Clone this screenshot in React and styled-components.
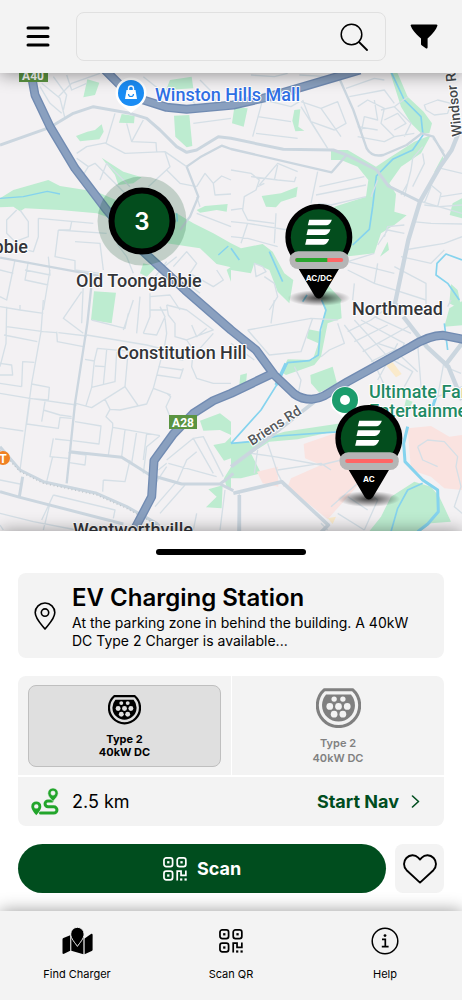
import React, { useState } from 'react'
import styled, { createGlobalStyle } from 'styled-components'

const GlobalStyle = createGlobalStyle`
  * {
    box-sizing: border-box;
  }

  body {
    margin: 0;
    background-color: #fff;
    color: #000;
    font-family: Inter, 'Liberation Sans', sans-serif;
  }

  button, input {
    font-family: inherit;
    color: inherit;
  }
`

/* ---------- icons ---------- */

const MenuIcon = () => (
  <svg width="24" height="21" viewBox="0 0 24 21" stroke="#000" strokeWidth="3" strokeLinecap="round" aria-hidden="true">
    <path d="M2 2H22M2 10.5H22M2 19H22" />
  </svg>
)

const SearchIcon = () => (
  <svg width="28" height="28" viewBox="0 0 28 28" fill="none" stroke="#000" strokeWidth="1.5" strokeLinecap="round" aria-hidden="true">
    <circle cx="11.5" cy="11.5" r="10.3" />
    <path d="M19 19L27 27" strokeWidth="1.8" />
  </svg>
)

const FilterIcon = () => (
  <svg width="28" height="25" viewBox="0 0 28 25" aria-hidden="true">
    <path d="M1.6 .5H26.4C27.3 .5 27.7 1.3 27.3 2.1C26 5.6 23.6 9 17.6 14.6V23.2C17.6 24.3 16.7 24.8 15.8 24.2L11.6 21.2C11.1 20.9 11 20.6 11 20.1V14.6C4.8 9 2.2 5.6 .8 2.1C.4 1.3 .7 .5 1.6 .5Z" />
  </svg>
)

const LocationIcon = () => (
  <svg width="22" height="28" viewBox="0 0 22 28" fill="none" stroke="#000" strokeWidth="1.6" strokeLinejoin="round" aria-hidden="true">
    <path d="M11 27C9 24 1.2 17.4 1.2 10.6A9.8 9.6 0 0 1 20.8 10.6C20.8 17.4 13 24 11 27Z" />
    <circle cx="11" cy="10.6" r="3.7" />
  </svg>
)

const PlugIcon = ({ width, color, hole }) => (
  <svg width={width} viewBox="0 0 134 118" aria-hidden="true">
    <path d="M25 5H109A63 63 0 1 1 25 5Z" fill="none" stroke={color} strokeWidth="9" strokeLinejoin="round" />
    <path d="M30 19H104A49 49 0 1 1 30 19Z" fill={color} />
    <g fill={hole}>
      <circle cx="54" cy="33" r="8" />
      <circle cx="80" cy="33" r="8" />
      <circle cx="41" cy="55" r="10" />
      <circle cx="67" cy="55" r="10" />
      <circle cx="93" cy="55" r="10" />
      <circle cx="54" cy="78" r="10" />
      <circle cx="80" cy="78" r="10" />
    </g>
  </svg>
)

const RouteIcon = () => (
  <svg width="28" height="28" viewBox="0 0 28 28" aria-hidden="true">
    <path d="M21 12.9H17A2.9 2.9 0 0 0 17 18.8H22.8A3.1 3.1 0 0 1 22.8 25.1H9.5" fill="none" stroke="#22a52b" strokeWidth="3" strokeLinecap="round" />
    <path fillRule="evenodd" fill="#22a52b" d="M5.3 27.2C4 25.6 .3 21.6 .3 18.4A5 5 0 0 1 10.3 18.4C10.3 21.6 6.6 25.6 5.3 27.2ZM5.3 16.2A2.2 2.2 0 1 0 5.3 20.6A2.2 2.2 0 1 0 5.3 16.2Z" />
    <path fillRule="evenodd" fill="#22a52b" stroke="#f3f3f3" strokeWidth=".6" d="M22 13.4C20.8 12 16.8 8.4 16.8 5.2A5.2 5.2 0 0 1 27.2 5.2C27.2 8.4 23.2 12 22 13.4ZM22 3A2.1 2.1 0 1 0 22 7.2A2.1 2.1 0 1 0 22 3Z" />
  </svg>
)

const ChevronIcon = () => (
  <svg width="9" height="13" viewBox="0 0 9 13" fill="none" stroke="#004d1e" strokeWidth="1.6" strokeLinecap="round" strokeLinejoin="round" aria-hidden="true">
    <path d="M1.5 1L7.5 6.5L1.5 12" />
  </svg>
)

const QrIcon = () => (
  <svg width="24" height="24" viewBox="0 0 25 25" fill="none" stroke="currentColor" strokeWidth="1.8" aria-hidden="true">
    <rect x="1" y="1" width="9" height="9" rx="2.4" />
    <rect x="14.8" y="1" width="9" height="9" rx="2.4" />
    <rect x="1" y="14.8" width="9" height="9" rx="2.4" />
    <path d="M14.8 24.6V14.8H18.8V19.2H23.8V14" />
    <g fill="currentColor" stroke="none">
      <rect x="4.3" y="4.3" width="2.4" height="2.4" />
      <rect x="18.1" y="4.3" width="2.4" height="2.4" />
      <rect x="4.3" y="18.1" width="2.4" height="2.4" />
      <rect x="17.8" y="22.3" width="2.3" height="2.3" />
      <rect x="22.4" y="22.3" width="2.3" height="2.3" />
    </g>
  </svg>
)

const HeartIcon = () => (
  <svg width="34" height="30" viewBox="0 0 34 30" fill="none" stroke="#000" strokeWidth="1.9" strokeLinejoin="round" aria-hidden="true">
    <path d="M17 28.6L3.6 16.2C.2 12.8 .2 7.4 3.4 4C6.8 .5 12 .4 15.2 3.6L17 5.6L18.8 3.6C22 .4 27.2 .5 30.6 4C33.8 7.4 33.8 12.8 30.4 16.2Z" />
  </svg>
)

const MapIcon = () => (
  <svg width="31" height="28" viewBox="0 0 31 28" aria-hidden="true">
    <path d="M.5 12.4C.5 11.6 .8 11.2 1.4 11L8.2 8.2V23.8L2 26.8C1.2 27.1 .5 26.8 .5 26Z" />
    <path d="M9.3 8.4L15.5 18.6L21.4 8.6V27.2L9.3 23.8Z" />
    <path d="M22.6 11.4L29 7C29.9 6.5 30.6 6.9 30.6 7.7V22.4C30.6 23.2 30.3 23.6 29.7 23.9L22.6 27.2Z" />
    <path d="M15.4 19.4C13.4 16.2 8.7 11.6 8.7 7A6.7 6.7 0 0 1 22.1 7C22.1 11.6 17.4 16.2 15.4 19.4Z" stroke="#f3f3f3" strokeWidth="1" />
  </svg>
)

const InfoIcon = () => (
  <svg width="28" height="28" viewBox="0 0 28 28" fill="none" stroke="#000" strokeWidth="1.5" aria-hidden="true">
    <circle cx="14" cy="14" r="12.8" />
    <path d="M11 12.4H14.3V19.6M10.8 19.6H17.6" strokeWidth="1.7" />
    <circle cx="14" cy="8.6" r="1.4" fill="#000" stroke="none" />
  </svg>
)

/* ---------- map ---------- */

const highways = [
  'M95 20L105 75L150 170L225 295L320 420L430 545L555 660L693 780L768 840L823 915L883 972Q905 988 935 988Q955 986 973 977L1043 935L1233 830Q1290 795 1330 796L1390 808',
  'M823 908L693 970L640 992L580 1030L520 1092L462 1172L455 1280L405 1375',
  'M315 0L360 45L430 90L500 112L560 118L700 105L800 82L893 55L1080 0',
]

const MapArt = () => (
  <MapSvg viewBox="0 0 462 458" preserveAspectRatio="xMidYMid slice" role="img" aria-label="Map of chargers around Old Toongabbie">
    <rect width="462" height="458" fill="#f3f1f3" />
    <g transform="scale(.33333) translate(0 -9)" fill="none" strokeLinejoin="round">
      {/* parks */}
      <g fill="#bdecd0">
        <path d="M262 28L298 38L285 75L250 82ZM510 30L575 20L580 55L498 60ZM365 132L404 138L402 160L357 158ZM522 137L568 135L577 228L560 232L526 200ZM228 198L262 185L285 180L305 163L311 185L298 208L240 214Z" />
        <path d="M0 385L40 360L145 330L180 348L290 365L360 395L425 420L530 430L580 460L640 490L693 520V592L650 582L600 535L555 528L500 520L430 480L290 430L180 420L75 415L60 424L40 410L0 412Z" />
        <path d="M305 263L370 305L425 322L400 340L355 345L345 315ZM590 420L615 408L683 402L680 425L650 420L600 428ZM430 580L470 590L440 620L420 610ZM282 664L348 668L335 760L273 750ZM680 600L693 590V635Z" />
        <g transform="translate(693 0)">
          <path d="M10 112L50 115L38 170L3 160ZM190 120L208 118L202 170L220 182L193 184L184 152ZM475 0L500 10L530 80L578 125L603 160L595 190L570 190L540 160L510 110ZM300 240L350 240L435 290L480 260L550 215L600 195L570 250L510 290L475 340L495 372L490 425L527 436L490 465L450 490L430 550L360 558L300 560L310 410L405 380L412 330L380 290L330 270L300 270ZM92 378L150 370L200 350L196 380L150 395L135 412L105 410ZM470 515L474 540L447 560ZM635 258L640 275L620 312L610 305ZM693 385L665 400L656 435L693 445Z" />
          <path d="M0 520L30 535L95 522L125 545L160 610L187 630L175 700L140 665L115 600L70 580L60 610L0 600ZM285 640L332 690L310 725L285 730L270 690ZM660 642L680 660L693 720L655 700Z" />
        </g>
        <g transform="translate(0 690)">
          <path d="M600 362L660 340L693 365V405L660 390L610 392ZM640 435L675 428L693 410V475L672 482ZM693 500L672 535L680 560L693 570ZM625 568L668 556L665 625L618 622L650 590Z" />
        </g>
        <g transform="translate(693 690)">
          <path d="M285 20L328 0L332 55L290 70L270 170L250 195L165 225L150 215L170 178L245 180L262 130L228 115L232 88L270 95ZM238 225L305 200L318 250L265 278L240 250ZM28 225L48 220L45 250L25 255ZM0 430L80 420L160 395L330 370L330 390L200 418L115 425L60 460L90 520L30 535L0 535ZM655 25L700 0V75L640 80ZM525 298L545 305L535 325L520 320Z" />
          <path d="M480 590L550 545L600 560L625 590L660 665L600 670L560 700H410L450 650Z" />
        </g>
      </g>

      {/* medical and shopping blocks */}
      <g transform="translate(693 690)">
        <path fill="#fae3e0" d="M218 432L340 390L430 500L290 658L170 560L180 535L270 495L222 475ZM78 515L140 500L142 560L95 550ZM530 385L600 378L655 410L693 405V570L640 565L600 530L540 510Z" />
        <path fill="#faeacb" d="M465 195L485 187L512 222L495 232ZM290 655L315 650L305 672Z" />
      </g>

      {/* creeks */}
      <g stroke="#85d3ee" strokeWidth="5">
        <path d="M0 385L70 380L142 364L180 372M530 430L532 455M655 555L685 528" strokeWidth="4" />
        <g transform="translate(693 0)">
          <path d="M480 5L520 90L570 140L576 195L545 240L485 268L436 318L425 410L415 478L365 525M0 535L25 570M115 545L155 635M228 675L215 695M693 570L645 552L618 580L615 615L650 640L685 690" />
        </g>
        <g transform="translate(693 690)">
          <path d="M272 0L285 30L268 90L262 165L235 182L170 188L140 250L90 330L0 430M0 430L60 425L140 408L330 395M640 70L650 150" />
          <path d="M530 380L518 430L522 485L575 540L620 570L622 635L590 672L560 695M615 290L605 320" strokeWidth="9" />
          <path d="M575 550L530 570L500 625L480 695" />
          <path d="M165 190L135 255" strokeWidth="10" />
        </g>
      </g>

      {/* side streets */}
      <g stroke="#d5dfe6" strokeWidth="4">
        <path d="M125 40L180 85L195 145M160 20L200 75L190 120M200 15L215 60L260 40M175 80L215 40L300 10M120 50L150 100L185 130M345 130L318 220L375 250L495 245L560 290M230 250L260 230L320 218M380 160L395 215L468 218L470 245M395 215L430 150M580 160L693 145M575 90L600 120L693 115M600 30L650 80L640 110M430 20L480 60M230 265L265 290L285 280L375 370M265 290L240 330M300 330L320 280L390 350M495 245L510 290L445 350M500 300L540 340L590 350M590 350L615 310L640 340L665 318L693 330M640 340L645 375L693 372M590 380L600 410M590 430L693 470" />
        <path d="M50 420L20 450V490L45 515L85 500V455L60 420M115 445V500L100 545L0 520M115 445L280 460M175 480L165 560L225 572V600L300 610M215 455L210 480L175 480M175 480L320 490M225 515L300 520L310 600M85 575L75 630L145 645M75 600L150 615L145 560M45 570L20 690L0 680M150 600L130 720M0 600L40 610M245 665L190 745L250 790M250 640L245 760M400 610L380 560L350 520M500 575L450 640M520 590L560 545L590 580L570 610L640 650L670 630L650 600M490 620L530 650M450 680L510 675L540 720M480 600L530 560M560 640L600 670M420 680L410 790M450 670V740L430 790" />
        <g transform="translate(693 0)">
          <path d="M60 15L130 20L170 10M205 15L290 20M180 95L100 70L65 200M100 90L180 110L205 95M80 140L180 155M75 190L200 205M210 95L270 115L320 95L345 160L310 180L240 155L290 235M240 155L215 90M210 110L290 235M270 115L330 200M345 55L430 25L460 30M355 80L460 60L490 100M380 110L410 90L460 115L450 160L490 200L550 190M430 90L440 150L400 140L390 190M450 120L490 110L540 160L520 200M490 110L530 80M460 150L500 130L525 160L490 180M380 170L440 180M380 200L460 215L490 200" />
          <path d="M580 105L620 90L660 100L650 130L610 135L585 120ZM0 300L60 310L85 330L75 360L40 380L35 420L50 450L130 460M85 345L140 280L200 305M60 320L140 330L190 335L195 320M100 340L80 350M140 285L130 330M0 420L35 415M0 455L50 460L170 480M0 500L50 505L140 530M135 430L130 520M50 460L30 520M260 305L240 400M265 350L400 320M255 375L405 345M262 400L300 405L405 380M440 330L420 380M520 380L540 300L545 265L575 230M545 350L580 280L575 250M510 375L530 340M605 205L640 245M555 390L693 430M600 350L580 400M600 345L630 370L620 410L580 405M625 410L693 405M630 295L693 310M630 380L693 370M545 455L600 460L693 462M460 500L470 470L520 465M440 525L470 480L520 490M520 540L640 520L693 500M510 560L600 580L640 540M430 550L350 575L490 610M350 600L430 640L585 690M440 580L430 640M490 590L585 640V720M370 640L365 690M70 580L95 590L105 605L75 620ZM100 620L130 640L140 680L115 720" />
        </g>
        <g transform="translate(0 690)">
          <path d="M20 80L130 95L170 98M12 105L112 125M0 20L60 30V15M60 30L130 40M130 0L123 95L95 250L60 510M20 20L18 130L0 200M170 95L172 125L250 140M175 98L260 108M65 260L68 185L103 187M65 260L0 250M0 190L35 195L38 225L0 225M95 252L148 262L145 300L85 295M0 280L90 295L230 315M90 295L80 372L175 385L180 352L215 355M135 305L125 365M130 330L180 345L215 350M0 383L70 393M160 415L150 470L205 475M165 417L210 422M158 470L140 545M205 458L258 465L255 495L208 488M225 365L303 378L297 432L218 422M0 540L60 552M0 675L10 690" />
          <path d="M275 60L375 85L385 40M260 105L440 135L500 150M255 178L283 183L292 145L400 155M283 183L275 262L345 245L350 155M285 198L315 200M320 150L310 255M275 262L257 320M228 310L275 323L375 260L385 150M375 260L415 318M315 298L330 328L360 330L440 312L460 265L512 285M330 328L318 350L338 370V382L480 407M338 382L325 465M375 390L365 470M410 395L395 490M440 400L430 480M480 407L440 440L430 520M500 280L512 290L498 320L510 350M460 265L485 170L550 180M475 200L547 210M470 225L540 235L550 205M430 100L470 105L495 50L480 20M400 0L370 90M450 30L500 30M500 15L505 45L525 70V110L560 120L640 90L600 60L560 30L500 15M560 120L580 150M575 75L590 110L620 85M495 55L500 100L490 160M580 150L575 200L590 235L640 250L693 250M600 145L640 100M500 480L580 415L640 520M505 490L650 530M475 510L500 490M530 550L560 480L590 455M580 415L610 410L670 530M465 620L530 545M480 640L555 555M310 540L375 545L390 480M310 540L308 575M160 585L345 630L340 655M160 585L125 660M150 610L130 690M0 640L100 665L230 690M460 560L500 500M580 690L590 640M675 570L660 690" />
        </g>
        <g transform="translate(693 690)">
          <path d="M50 90L240 55L320 60M50 90L115 165L210 155L245 55M130 0L120 70M270 170L295 150L340 130L320 70M340 75L430 190L480 300M370 60L470 170L545 215L520 260M350 95L420 60L460 30M370 125L470 75M395 155L540 75M420 185L490 150L560 215M440 130L500 150M390 60L520 130L500 180M430 50L540 100M660 0L650 20M640 180L620 290L693 260M640 200L690 220M500 130L440 240M560 130L570 260L545 290M0 130L70 180M190 200L210 240L200 290M110 430L140 520L160 560M140 510L270 490L300 510M80 450L70 520M60 460L130 470L270 495L330 480M25 580L20 700M300 620L380 550L440 600L400 690M320 640L400 690M350 590L410 630M560 440L590 420L640 425L680 470L675 500L690 560L670 620L693 640M560 440L575 480L620 500M270 670L290 690" />
        </g>
      </g>

      {/* collector roads */}
      <g stroke="#cbd6df" strokeWidth="9">
        <path d="M0 225L150 172L220 130L280 110L390 130L440 145L480 180L530 230L560 247L590 240L655 200L693 205L850 238L1000 240L1040 255L1130 300L1165 348L1260 395" />
        <path d="M560 290L600 262L665 227L693 237L995 307L1040 255M560 290L595 380L570 440L540 480M0 563L310 620M275 640L262 760L225 1000L200 1240" strokeWidth="7" />
        <path d="M1020 30L1060 120L1100 235Q1115 262 1150 255L1220 225L1265 190L1300 200L1335 260" strokeWidth="7" />
        <path d="M1375 190L1355 240L1320 290L1260 395L1225 510L1185 700L1210 730M1210 740L1280 830L1345 890L1386 990M1340 880L1386 820" strokeWidth="13" />
        <path d="M210 1145L365 1162L450 1215L545 1242L660 1242Q685 1225 700 1210M660 1242L700 1262" />
        <path d="M0 1265L60 1282L370 1362M68 1220L58 1280M0 1130L60 1200L130 1235L290 1270L380 1310L470 1360L500 1390" />
        <path d="M950 990L760 1140L693 1190M700 1270L845 1235L985 1365L960 1390M718 1275V1390" strokeWidth="11" />
      </g>
      <path d="M0 1140L60 1205L130 1240L290 1275L380 1315L480 1370" stroke="#bfc6cb" strokeWidth="4" strokeDasharray="3 8" />

      {/* motorways */}
      {highways.map((d) => <path key={d} d={d} stroke="#718bb2" strokeWidth="27" />)}
      {highways.map((d) => <path key={d} d={d} stroke="#8aa0bf" strokeWidth="19" />)}
    </g>

    {/* place badges */}
    <g>
      <path d="M131 40L120 31A15.500 15.500 0 1 1 142 31Z" fill="#fff" />
      <circle cx="131" cy="20" r="13" fill="#1a8cf4" />
      <path d="M126.500 17H135.500L137 26H125Z" fill="#fff" />
      <path d="M128.500 17V15.500A2.500 2.500 0 0 1 133.500 15.500V17" fill="none" stroke="#fff" strokeWidth="1.400" />
      <path d="M128.500 21A2.500 2.500 0 0 0 133.500 21" fill="none" stroke="#1a8cf4" strokeWidth="1.200" />
      <path d="M345 346L333 336A14.500 14.500 0 1 1 357 336Z" fill="#fff" />
      <circle cx="345" cy="327" r="13" fill="#1b9c6c" />
      <circle cx="345" cy="327" r="5" fill="#fff" />
      <circle cx="3" cy="385" r="7" fill="#f08122" />
      <rect x="19" y="-4" width="29" height="13" fill="#5b9441" />
      <rect x="169" y="342" width="28" height="14" fill="#5b9441" />
    </g>
    <BadgeLabel x="33" y="7">A40</BadgeLabel>
    <BadgeLabel x="183" y="354">A28</BadgeLabel>
    <BadgeLabel x="3" y="390">T</BadgeLabel>

    <PlaceLabel x="155" y="28" $color="#2f6fe4">Winston Hills Mall</PlaceLabel>
    <PlaceLabel x="76" y="214">Old Toongabbie</PlaceLabel>
    <PlaceLabel x="28" y="180" textAnchor="end">Toongabbie</PlaceLabel>
    <PlaceLabel x="117" y="286">Constitution Hill</PlaceLabel>
    <PlaceLabel x="352" y="242">Northmead</PlaceLabel>
    <PlaceLabel x="73" y="463">Wentworthville</PlaceLabel>
    <PlaceLabel x="369" y="325" $color="#1f8a64">Ultimate Fan</PlaceLabel>
    <PlaceLabel x="369" y="344" $color="#1f8a64">Entertainment</PlaceLabel>
    <PlaceLabel transform="translate(252 373) rotate(-33)" $size={14} $color="#55585c">Briens Rd</PlaceLabel>
    <PlaceLabel transform="translate(462 63) rotate(-96)" $size={14} $color="#44474b">Windsor Rd</PlaceLabel>
  </MapSvg>
)

const ChargerPin = ({ type, available, left, top }) => (
  <Pin style={{ left, top }} aria-label={`${type} charger`}>
    <svg width="67" height="102" viewBox="0 0 201 306" overflow="visible" aria-hidden="true">
      <defs>
        <radialGradient id="pinShadow">
          <stop offset="0" stopColor="#000" stopOpacity=".75" />
          <stop offset="1" stopColor="#000" stopOpacity="0" />
        </radialGradient>
      </defs>
      <ellipse cx="100" cy="282" rx="94" ry="24" fill="url(#pinShadow)" />
      <path d="M100 0A100 100 0 0 1 187 150L112 277Q100 290 88 277L13 150A100 100 0 0 1 100 0Z" />
      <circle cx="100" cy="100" r="84" fill="#034d1d" />
      <g fill="#fff">
        <path d="M71 47H139Q134 63 122 64H67Z" />
        <path d="M67 76H135Q130 92 118 93H63Z" />
        <path d="M63 105H131Q126 121 114 122H59Z" />
      </g>
      <rect x="12" y="142" width="178" height="53" rx="26" fill="#b5b5b5" />
      <rect x="29" y="162" width="144" height="12" rx="6" fill="#ff6666" />
      {available > 0 && <path d={`M35 162H${29 + 144 * available}V174H35A6 6 0 0 1 35 162Z`} fill="#29a52e" />}
      <PinLabel x="100" y="231">{type}</PinLabel>
    </svg>
  </Pin>
)

/* ---------- page ---------- */

const plugs = [
  { id: 'a', name: 'Type 2', power: '40kW DC' },
  { id: 'b', name: 'Type 2', power: '40kW DC' },
]

const App = () => {
  const [plug, setPlug] = useState('a')
  const [search, setSearch] = useState('')

  return (
    <Page>
      <GlobalStyle />
      <Header>
        <IconButton aria-label="Menu"><MenuIcon /></IconButton>
        <SearchBox>
          <SearchInput aria-label="Search" value={search} onChange={(e) => setSearch(e.target.value)} />
          <SearchIcon />
        </SearchBox>
        <IconButton aria-label="Filter"><FilterIcon /></IconButton>
      </Header>

      <MapArea>
        <MapArt />
        <Cluster aria-label="3 chargers"><ClusterCount>3</ClusterCount></Cluster>
        <ChargerPin type="AC/DC" available={0.67} left="69.1%" top="28.5%" />
        <ChargerPin type="AC" available={0} left="79.9%" top="72.5%" />
      </MapArea>

      <Sheet>
        <Handle />
        <StationCard>
          <LocationIcon />
          <div>
            <StationName>EV Charging Station</StationName>
            <StationText>At the parking zone in behind the building. A 40kW DC Type 2 Charger is available...</StationText>
          </div>
        </StationCard>

        <DetailCard>
          <Plugs>
            {plugs.map(({ id, name, power }) => {
              const active = plug === id
              return (
                <PlugCell key={id}>
                  <PlugButton $active={active} aria-pressed={active} onClick={() => setPlug(id)}>
                    <PlugIcon width={active ? 33 : 45} color={active ? '#000' : '#808080'} hole={active ? '#dfdfdf' : '#f3f3f3'} />
                    <PlugText $active={active}>{name}<br />{power}</PlugText>
                  </PlugButton>
                </PlugCell>
              )
            })}
          </Plugs>
          <Trip>
            <RouteIcon />
            <Distance>2.5 km</Distance>
            <NavLink href="#nav">Start Nav <ChevronIcon /></NavLink>
          </Trip>
        </DetailCard>

        <Actions>
          <ScanButton><QrIcon />Scan</ScanButton>
          <LikeButton aria-label="Add to favourites"><HeartIcon /></LikeButton>
        </Actions>
      </Sheet>

      <TabBar>
        <Tab href="#find"><TabIcon><MapIcon /></TabIcon>Find Charger</Tab>
        <Tab href="#scan"><TabIcon><QrIcon /></TabIcon>Scan QR</Tab>
        <Tab href="#help"><TabIcon><InfoIcon /></TabIcon>Help</Tab>
      </TabBar>
    </Page>
  )
}

const Page = styled.div`
  display: flex;
  flex-direction: column;
  min-height: 100vh;
`

const Header = styled.header`
  display: grid;
  grid-template-columns: 76px minmax(0, 1fr) 76px;
  align-items: center;
  padding: 12px 0;
  background-color: #f3f3f3;
  box-shadow: 0 2px 16px rgba(0, 0, 0, 0.4);
  position: relative;
  z-index: 2;
`

const IconButton = styled.button`
  display: flex;
  justify-content: center;
  padding: 8px;
  border: none;
  background: none;
  cursor: pointer;
`

const SearchBox = styled.label`
  display: flex;
  align-items: center;
  height: 49px;
  padding: 0 17px 0 16px;
  border: #e0e0e0 solid 1px;
  border-radius: 8px;
`

const SearchInput = styled.input`
  flex: 1;
  min-width: 0;
  border: none;
  outline: none;
  background: none;
  font-size: 16px;
`

const MapArea = styled.main`
  flex: 1;
  min-height: 320px;
  position: relative;
  overflow: hidden;
`

const MapSvg = styled.svg`
  position: absolute;
  inset: 0;
  width: 100%;
  height: 100%;
`

const PlaceLabel = styled.text`
  font-family: Roboto, 'Liberation Sans', sans-serif;
  font-size: ${({ $size }) => $size || 18}px;
  font-weight: 500;
  fill: ${({ $color }) => $color || '#333539'};
  stroke: #fff;
  stroke-width: 2px;
  stroke-linejoin: round;
  paint-order: stroke;
`

const BadgeLabel = styled.text`
  font-family: Roboto, 'Liberation Sans', sans-serif;
  font-size: 12px;
  font-weight: 700;
  fill: #fff;
  text-anchor: middle;
`

const Cluster = styled.button`
  position: absolute;
  left: 30.7%;
  top: 32.3%;
  transform: translate(-50%, -50%);
  padding: 11px;
  border: none;
  border-radius: 50%;
  background-color: rgba(0, 77, 30, 0.2);
  cursor: pointer;
`

const ClusterCount = styled.span`
  display: grid;
  place-items: center;
  width: 67px;
  height: 67px;
  border: #000 solid 6px;
  border-radius: 50%;
  background-color: #034d1d;
  color: #fff;
  font-size: 24px;
  font-weight: 600;
`

const Pin = styled.button`
  position: absolute;
  transform: translateX(-50%);
  padding: 0;
  border: none;
  background: none;
  cursor: pointer;

  svg {
    display: block;
  }
`

const PinLabel = styled.text`
  font-family: Inter, 'Liberation Sans', sans-serif;
  font-size: 24px;
  font-weight: 700;
  fill: #fff;
  text-anchor: middle;
`

const Sheet = styled.section`
  display: flex;
  flex-direction: column;
  gap: 18px;
  padding: 18px;
  background-color: #fff;
  box-shadow: 0 0 16px rgba(0, 0, 0, 0.4);
  position: relative;
`

const Handle = styled.div`
  width: 150px;
  height: 6px;
  margin: 0 auto;
  border-radius: 3px;
  background-color: #000;
`

const StationCard = styled.div`
  display: grid;
  grid-template-columns: 22px 1fr;
  align-items: center;
  gap: 16px;
  padding: 9px 16px 8px;
  border-radius: 8px;
  background-color: #f3f3f3;
`

const StationName = styled.h1`
  margin: 0;
  font-size: 24px;
  font-weight: 600;
  line-height: 32px;
`

const StationText = styled.p`
  margin: 0;
  font-size: 14px;
  line-height: 18px;
`

const DetailCard = styled.div`
  border-radius: 8px;
  background-color: #f3f3f3;
`

const Plugs = styled.div`
  display: grid;
  grid-template-columns: 1fr 1fr;
  border-bottom: #fff solid 2px;
`

const PlugCell = styled.div`
  display: flex;
  height: 99px;
  padding: 9px 10px 8px;

  & + & {
    border-left: #fff solid 1px;
  }
`

const PlugButton = styled.button`
  flex: 1;
  display: flex;
  flex-direction: column;
  align-items: center;
  justify-content: center;
  gap: 8px;
  padding: 2px 0 0;
  border: ${({ $active }) => ($active ? '#bfbfbf' : 'transparent')} solid 1px;
  border-radius: 8px;
  background-color: ${({ $active }) => ($active ? '#dfdfdf' : 'transparent')};
  cursor: pointer;
`

const PlugText = styled.span`
  font-size: 11px;
  font-weight: ${({ $active }) => ($active ? 700 : 600)};
  line-height: ${({ $active }) => ($active ? '13px' : '15px')};
  color: ${({ $active }) => ($active ? '#000' : '#808080')};
`

const Trip = styled.div`
  display: flex;
  align-items: center;
  height: 49px;
  padding: 0 24px 0 13px;
`

const Distance = styled.span`
  margin-left: 13px;
  font-size: 18px;
`

const NavLink = styled.a`
  display: flex;
  align-items: center;
  gap: 12px;
  margin-left: auto;
  font-size: 18px;
  font-weight: 700;
  color: #004d1e;
  text-decoration: none;
`

const Actions = styled.div`
  display: flex;
  gap: 9px;
`

const ScanButton = styled.button`
  flex: 1;
  display: flex;
  align-items: center;
  justify-content: center;
  gap: 10px;
  height: 49px;
  border: none;
  border-radius: 25px;
  background-color: #004d1e;
  color: #fff;
  font-size: 18px;
  font-weight: 700;
  cursor: pointer;
`

const LikeButton = styled.button`
  display: grid;
  place-items: center;
  width: 49px;
  height: 49px;
  padding: 0;
  border: none;
  border-radius: 8px;
  background-color: #f3f3f3;
  cursor: pointer;
`

const TabBar = styled.nav`
  display: grid;
  grid-template-columns: repeat(3, 1fr);
  padding: 16px 0 18px;
  background-color: #f3f3f3;
  box-shadow: 0 0 16px rgba(0, 0, 0, 0.4);
  position: relative;
`

const Tab = styled.a`
  display: flex;
  flex-direction: column;
  align-items: center;
  gap: 11px;
  font-size: 11px;
  line-height: 16px;
  color: #000;
  text-decoration: none;
`

const TabIcon = styled.span`
  display: grid;
  place-items: center;
  height: 28px;
`

export default App
